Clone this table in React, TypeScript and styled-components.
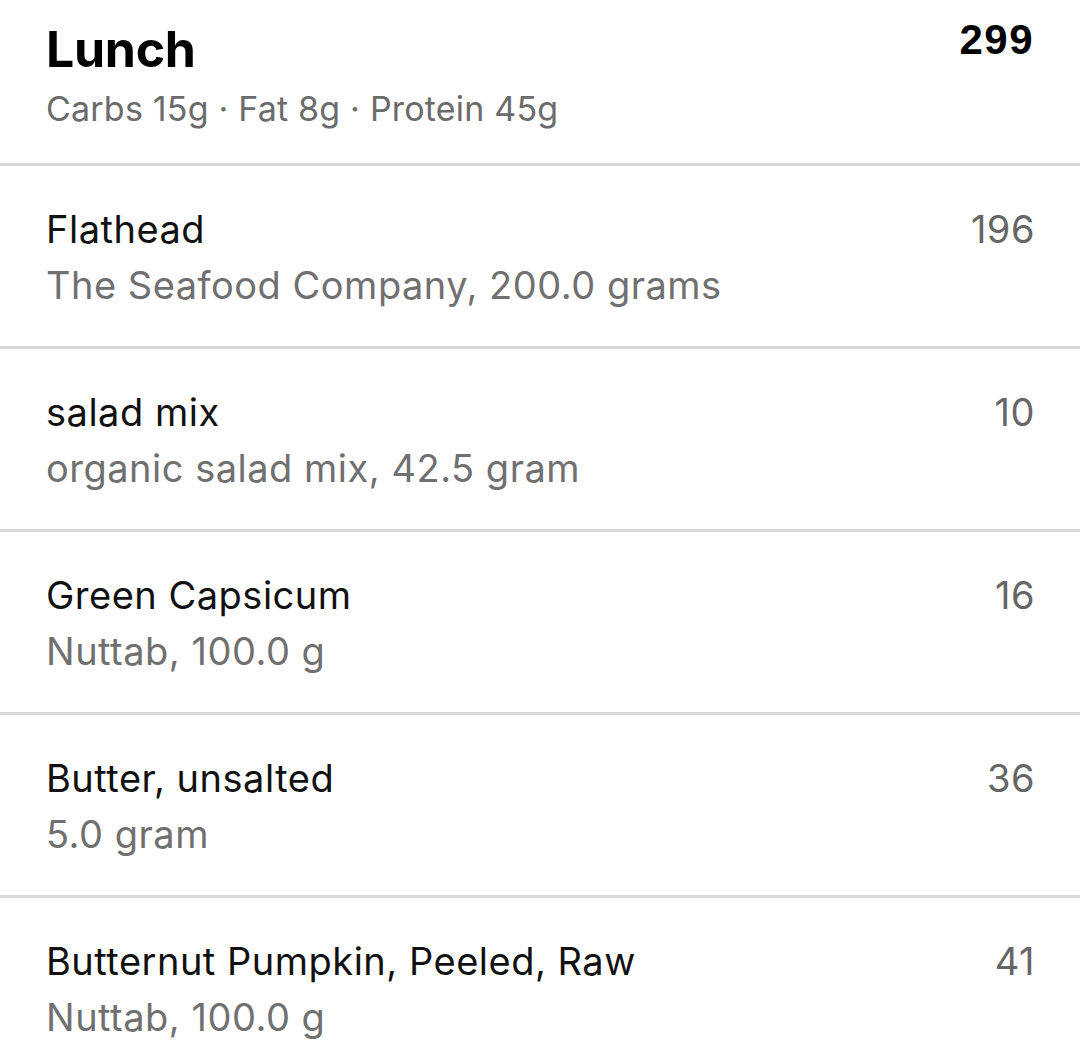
import React, { FC } from "react";
import styled, { createGlobalStyle } from "styled-components";

const GlobalStyle = createGlobalStyle`
  html, body {
    margin: 0;
    padding: 0;
    background: #fff;
  }
  body {
    font-family: "Inter", "Liberation Sans", sans-serif;
    -webkit-font-smoothing: antialiased;
  }
`;

const Page = styled.div`
  width: 1080px;
  background: #fff;
`;

const Header = styled.div`
  display: flex;
  justify-content: space-between;
  align-items: flex-start;
  padding: 19px 47px 0 46px;
  height: 166px;
  box-sizing: border-box;
  border-bottom: 3px solid #d9d9d9;
`;

const Title = styled.h1`
  margin: 0;
  font-size: 50px;
  font-weight: 700;
  color: #000;
  line-height: 60px;
  letter-spacing: -0.3px;
`;

const Macros = styled.div`
  margin-top: 10px;
  font-size: 34px;
  color: #6b6b6b;
  line-height: 40px;
  letter-spacing: 0.2px;
`;

const Total = styled.div`
  margin-top: -1px;
  margin-right: -1px;
  font-family: "Liberation Sans", "Inter", sans-serif;
  font-weight: 700;
  font-size: 42px;
  letter-spacing: 1.5px;
  color: #000;
  line-height: 44px;
`;

const Row = styled.div`
  display: flex;
  justify-content: space-between;
  align-items: flex-start;
  padding: 35px 47px 0 46px;
  height: 183px;
  box-sizing: border-box;
  border-bottom: 3px solid #d9d9d9;

  &:last-child {
    border-bottom: none;
  }
`;

const Name = styled.div`
  font-size: 38px;
  color: #111;
  line-height: 56px;
  letter-spacing: 0.5px;
`;

const Detail = styled(Name)`
  color: #707070;
`;

const Calories = styled(Name)`
  margin-right: -2px;
  color: #666;
`;

interface FoodItem {
  name: string;
  detail: string;
  kcal: number;
}

const items: FoodItem[] = [
  { name: "Flathead", detail: "The Seafood Company, 200.0 grams", kcal: 196 },
  { name: "salad mix", detail: "organic salad mix, 42.5 gram", kcal: 10 },
  { name: "Green Capsicum", detail: "Nuttab, 100.0 g", kcal: 16 },
  { name: "Butter, unsalted", detail: "5.0 gram", kcal: 36 },
  { name: "Butternut Pumpkin, Peeled, Raw", detail: "Nuttab, 100.0 g", kcal: 41 },
];

const App: FC = () => {
  return (
    <Page>
      <GlobalStyle />
      <Header>
        <div>
          <Title>Lunch</Title>
          <Macros>Carbs 15g · Fat 8g · Protein 45g</Macros>
        </div>
        <Total>299</Total>
      </Header>
      {items.map((item, index) => (
        <Row key={index}>
          <div>
            <Name>{item.name}</Name>
            <Detail>{item.detail}</Detail>
          </div>
          <Calories>{item.kcal}</Calories>
        </Row>
      ))}
    </Page>
  );
};

export default App;
